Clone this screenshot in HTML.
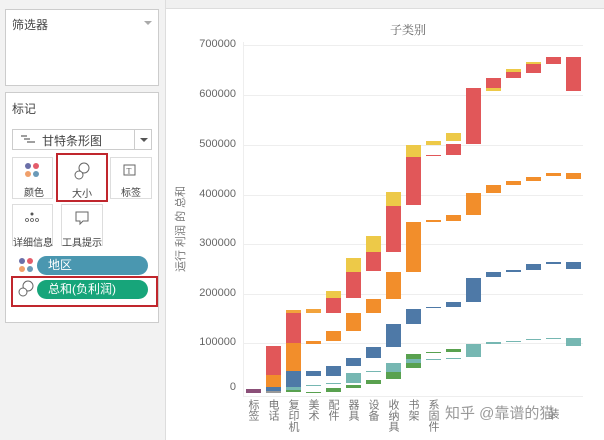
<!DOCTYPE html><html><head><meta charset="utf-8"><style>
*{margin:0;padding:0;box-sizing:border-box}
body{width:604px;height:440px;position:relative;overflow:hidden;background:#fff;font-family:"Liberation Sans","Noto Sans CJK SC",sans-serif;color:#333}
.a{position:absolute}
.lbl{font-size:11px;color:#555}
.b{position:absolute;width:15px}
.yt{position:absolute;right:368px;font-size:11px;color:#666;text-align:right;width:50px}
.xl{position:absolute;top:399px;writing-mode:vertical-rl;font-size:11px;color:#777;width:14px;line-height:14px}
.grid{position:absolute;left:243px;width:340px;height:1px;background:#eee}
</style></head><body>
<div class="a" style="left:0;top:0;width:166px;height:440px;background:#f2f2f2;border-right:1px solid #ddd"></div>
<div class="a" style="left:166px;top:0;width:438px;height:9px;background:#f0f0f0;border-bottom:1px solid #ddd"></div>
<div class="a" style="left:5px;top:9px;width:154px;height:77px;background:#fff;border:1px solid #ccc"></div>
<div class="a lbl" style="left:12px;top:16px;font-size:12px;color:#444">筛选器</div>
<div class="a" style="left:144px;top:21px;border:4px solid transparent;border-top:4px solid #aaa"></div>
<div class="a" style="left:5px;top:92px;width:154px;height:231px;background:#fff;border:1px solid #ccc"></div>
<div class="a" style="left:12px;top:100px;font-size:12px;color:#444">标记</div>
<div class="a" style="left:12px;top:129px;width:140px;height:21px;border:1px solid #ccc;background:#fff"></div>
<div class="a" style="left:134px;top:129px;width:1px;height:21px;background:#ccc"></div>
<div class="a" style="left:140px;top:138px;border:4px solid transparent;border-top:4px solid #555"></div>
<svg class="a" style="left:20px;top:134px" width="18" height="10"><path d="M1 2h6M4 5h6M7 8h8" stroke="#666" stroke-width="1.2"/></svg>
<div class="a" style="left:42px;top:132px;font-size:12px;color:#444">甘特条形图</div>
<div class="a" style="left:12px;top:157px;width:41px;height:42px;border:1px solid #ddd"></div>
<div class="a" style="left:110px;top:157px;width:42px;height:42px;border:1px solid #ddd"></div>
<div class="a" style="left:12px;top:204px;width:41px;height:42px;border:1px solid #ddd"></div>
<div class="a" style="left:61px;top:204px;width:42px;height:42px;border:1px solid #ddd"></div>
<div class="a" style="left:56px;top:153px;width:52px;height:49px;border:2px solid #c0262d"></div>
<svg class="a" style="left:0;top:0" width="166" height="320">
<circle cx="28" cy="166" r="3" fill="#6b6fa8"/><circle cx="36" cy="166" r="3" fill="#e45c6a"/><circle cx="28" cy="174" r="3" fill="#f0a06b"/><circle cx="36" cy="174" r="3" fill="#6b9ab8"/>
<circle cx="84" cy="168" r="5" fill="none" stroke="#666"/><circle cx="79" cy="175" r="4" fill="#fff" stroke="#666"/>
<rect x="124" y="165" width="11" height="10" fill="none" stroke="#666"/><text x="126.5" y="173.5" font-size="8" fill="#555" font-family="Liberation Serif">T</text>
<circle cx="32" cy="214" r="1.5" fill="#555"/><circle cx="27" cy="220" r="1.5" fill="none" stroke="#555" stroke-width=".8"/><circle cx="32" cy="220" r="1.5" fill="none" stroke="#555" stroke-width=".8"/><circle cx="37" cy="220" r="1.5" fill="none" stroke="#555" stroke-width=".8"/>
<path d="M76 212h12v9h-5l-3 3v-3h-4z" fill="none" stroke="#666"/>
<circle cx="22" cy="261" r="3" fill="#6b6fa8"/><circle cx="30" cy="261" r="3" fill="#e45c6a"/><circle cx="22" cy="269" r="3" fill="#f0a06b"/><circle cx="30" cy="269" r="3" fill="#6b9ab8"/>
<circle cx="28" cy="286" r="5" fill="none" stroke="#666"/><circle cx="23" cy="292" r="4" fill="#fff" stroke="#666"/>
</svg>
<div class="a" style="left:24px;top:184px;font-size:10px;color:#444">颜色</div>
<div class="a" style="left:72px;top:185px;font-size:10px;color:#444">大小</div>
<div class="a" style="left:121px;top:184px;font-size:10px;color:#444">标签</div>
<div class="a" style="left:13px;top:234px;font-size:10px;color:#444">详细信息</div>
<div class="a" style="left:62px;top:234px;font-size:10px;color:#444">工具提示</div>
<div class="a" style="left:37px;top:256px;width:111px;height:19px;border-radius:10px;background:#4a97b0;color:#fff;font-size:12px;line-height:19px;padding-left:11px">地区</div>
<div class="a" style="left:37px;top:280px;width:111px;height:19px;border-radius:10px;background:#17a57a;color:#fff;font-size:12px;line-height:19px;padding-left:11px">总和(负利润)</div>
<div class="a" style="left:11px;top:276px;width:147px;height:31px;border:2px solid #c0262d"></div>

<div class="a" style="left:390px;top:21px;font-size:12px;color:#666;font-family:'Noto Serif CJK SC',serif">子类别</div>
<div class="a" style="left:140px;top:224px;transform:rotate(-90deg);transform-origin:center;font-size:11px;color:#777;width:80px;text-align:center;white-space:nowrap">运行 利润 的 总和</div>
<div class="grid" style="top:45px"></div><div class="grid" style="top:95px"></div><div class="grid" style="top:145px"></div><div class="grid" style="top:195px"></div><div class="grid" style="top:244px"></div><div class="grid" style="top:294px"></div><div class="grid" style="top:343px"></div><div class="grid" style="top:396px"></div>
<div class="a" style="left:243px;top:42px;width:1px;height:354px;background:#eee"></div>
<div class="yt" style="top:38px">700000</div><div class="yt" style="top:88px">600000</div><div class="yt" style="top:138px">500000</div><div class="yt" style="top:188px">400000</div><div class="yt" style="top:237px">300000</div><div class="yt" style="top:287px">200000</div><div class="yt" style="top:336px">100000</div><div class="yt" style="top:381px">0</div>

<div class="b" style="left:246px;top:389px;height:4px;background:#8b4f78"></div>
<div class="b" style="left:266px;top:346px;height:29px;background:#e15759"></div><div class="b" style="left:266px;top:375px;height:12px;background:#f28e2b"></div><div class="b" style="left:266px;top:387px;height:4px;background:#4e79a7"></div><div class="b" style="left:266px;top:391px;height:2px;background:#999"></div>
<div class="b" style="left:286px;top:310px;height:3px;background:#f2a33c"></div><div class="b" style="left:286px;top:313px;height:30px;background:#e15759"></div><div class="b" style="left:286px;top:343px;height:28px;background:#f28e2b"></div><div class="b" style="left:286px;top:371px;height:16px;background:#4e79a7"></div><div class="b" style="left:286px;top:387px;height:3px;background:#76b7b2"></div><div class="b" style="left:286px;top:390px;height:2px;background:#59a14f"></div>
<div class="b" style="left:306px;top:309px;height:4px;background:#f2a33c"></div><div class="b" style="left:306px;top:341px;height:3px;background:#f28e2b"></div><div class="b" style="left:306px;top:371px;height:5px;background:#4e79a7"></div><div class="b" style="left:306px;top:385px;height:1px;background:#76b7b2"></div><div class="b" style="left:306px;top:392px;height:1px;background:#59a14f"></div>
<div class="b" style="left:326px;top:291px;height:7px;background:#edc948"></div><div class="b" style="left:326px;top:298px;height:15px;background:#e15759"></div><div class="b" style="left:326px;top:331px;height:10px;background:#f28e2b"></div><div class="b" style="left:326px;top:366px;height:10px;background:#4e79a7"></div><div class="b" style="left:326px;top:383px;height:1px;background:#76b7b2"></div><div class="b" style="left:326px;top:388px;height:4px;background:#59a14f"></div>
<div class="b" style="left:346px;top:258px;height:14px;background:#edc948"></div><div class="b" style="left:346px;top:272px;height:26px;background:#e15759"></div><div class="b" style="left:346px;top:313px;height:18px;background:#f28e2b"></div><div class="b" style="left:346px;top:358px;height:8px;background:#4e79a7"></div><div class="b" style="left:346px;top:373px;height:10px;background:#76b7b2"></div><div class="b" style="left:346px;top:385px;height:3px;background:#59a14f"></div>
<div class="b" style="left:366px;top:236px;height:16px;background:#edc948"></div><div class="b" style="left:366px;top:252px;height:19px;background:#e15759"></div><div class="b" style="left:366px;top:299px;height:14px;background:#f28e2b"></div><div class="b" style="left:366px;top:347px;height:11px;background:#4e79a7"></div><div class="b" style="left:366px;top:371px;height:1px;background:#76b7b2"></div><div class="b" style="left:366px;top:380px;height:4px;background:#59a14f"></div>
<div class="b" style="left:386px;top:192px;height:14px;background:#edc948"></div><div class="b" style="left:386px;top:206px;height:46px;background:#e15759"></div><div class="b" style="left:386px;top:272px;height:27px;background:#f28e2b"></div><div class="b" style="left:386px;top:324px;height:23px;background:#4e79a7"></div><div class="b" style="left:386px;top:363px;height:9px;background:#76b7b2"></div><div class="b" style="left:386px;top:372px;height:7px;background:#59a14f"></div>
<div class="b" style="left:406px;top:145px;height:12px;background:#edc948"></div><div class="b" style="left:406px;top:157px;height:48px;background:#e15759"></div><div class="b" style="left:406px;top:222px;height:50px;background:#f28e2b"></div><div class="b" style="left:406px;top:309px;height:15px;background:#4e79a7"></div><div class="b" style="left:406px;top:354px;height:5px;background:#59a14f"></div><div class="b" style="left:406px;top:359px;height:4px;background:#76b7b2"></div><div class="b" style="left:406px;top:363px;height:5px;background:#59a14f"></div>
<div class="b" style="left:426px;top:141px;height:4px;background:#edc948"></div><div class="b" style="left:426px;top:155px;height:1px;background:#e15759"></div><div class="b" style="left:426px;top:220px;height:2px;background:#f28e2b"></div><div class="b" style="left:426px;top:307px;height:1px;background:#4e79a7"></div><div class="b" style="left:426px;top:352px;height:1px;background:#59a14f"></div><div class="b" style="left:426px;top:359px;height:1px;background:#76b7b2"></div>
<div class="b" style="left:446px;top:133px;height:8px;background:#edc948"></div><div class="b" style="left:446px;top:144px;height:11px;background:#e15759"></div><div class="b" style="left:446px;top:215px;height:6px;background:#f28e2b"></div><div class="b" style="left:446px;top:302px;height:5px;background:#4e79a7"></div><div class="b" style="left:446px;top:349px;height:3px;background:#59a14f"></div><div class="b" style="left:446px;top:358px;height:1px;background:#76b7b2"></div>
<div class="b" style="left:466px;top:88px;height:56px;background:#e15759"></div><div class="b" style="left:466px;top:193px;height:22px;background:#f28e2b"></div><div class="b" style="left:466px;top:278px;height:24px;background:#4e79a7"></div><div class="b" style="left:466px;top:344px;height:13px;background:#76b7b2"></div>
<div class="b" style="left:486px;top:78px;height:10px;background:#e15759"></div><div class="b" style="left:486px;top:88px;height:3px;background:#edc948"></div><div class="b" style="left:486px;top:185px;height:8px;background:#f28e2b"></div><div class="b" style="left:486px;top:272px;height:5px;background:#4e79a7"></div><div class="b" style="left:486px;top:342px;height:2px;background:#76b7b2"></div>
<div class="b" style="left:506px;top:69px;height:3px;background:#edc948"></div><div class="b" style="left:506px;top:72px;height:6px;background:#e15759"></div><div class="b" style="left:506px;top:181px;height:4px;background:#f28e2b"></div><div class="b" style="left:506px;top:270px;height:2px;background:#4e79a7"></div><div class="b" style="left:506px;top:341px;height:1px;background:#76b7b2"></div>
<div class="b" style="left:526px;top:62px;height:2px;background:#edc948"></div><div class="b" style="left:526px;top:64px;height:9px;background:#e15759"></div><div class="b" style="left:526px;top:177px;height:4px;background:#f28e2b"></div><div class="b" style="left:526px;top:264px;height:6px;background:#4e79a7"></div><div class="b" style="left:526px;top:339px;height:1px;background:#76b7b2"></div>
<div class="b" style="left:546px;top:57px;height:7px;background:#e15759"></div><div class="b" style="left:546px;top:173px;height:3px;background:#f28e2b"></div><div class="b" style="left:546px;top:262px;height:2px;background:#4e79a7"></div><div class="b" style="left:546px;top:338px;height:1px;background:#76b7b2"></div>
<div class="b" style="left:566px;top:57px;height:34px;background:#e15759"></div><div class="b" style="left:566px;top:173px;height:6px;background:#f28e2b"></div><div class="b" style="left:566px;top:262px;height:7px;background:#4e79a7"></div><div class="b" style="left:566px;top:338px;height:8px;background:#76b7b2"></div>

<div class="xl" style="left:246px">标签</div><div class="xl" style="left:266px">电话</div><div class="xl" style="left:286px">复印机</div><div class="xl" style="left:306px">美术</div><div class="xl" style="left:326px">配件</div><div class="xl" style="left:346px">器具</div><div class="xl" style="left:366px">设备</div><div class="xl" style="left:386px">收纳具</div><div class="xl" style="left:406px">书架</div><div class="xl" style="left:426px">系固件</div><div class="xl" style="left:546px;top:408px">装</div>
<div class="a" style="left:445px;top:402px;font-size:15px;color:#888;opacity:.85">知乎 @靠谱的猫</div>
</body></html>
